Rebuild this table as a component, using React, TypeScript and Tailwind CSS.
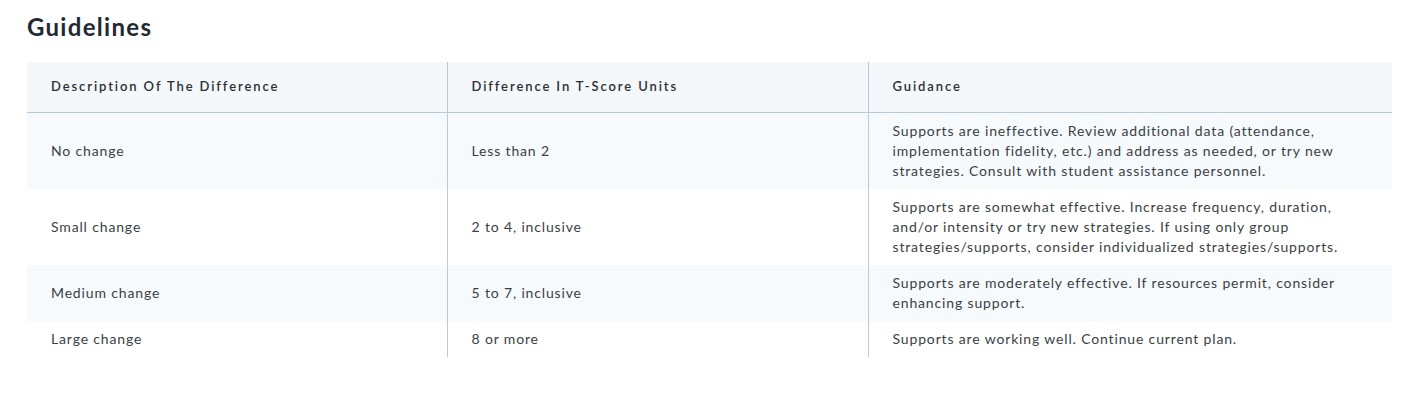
import React from 'react'

interface Row {
  description: string
  difference: string
  guidance: string
}

const rows: Row[] = [
  {
    description: 'No change',
    difference: 'Less than 2',
    guidance:
      'Supports are ineffective. Review additional data (attendance, implementation fidelity, etc.) and address as needed, or try new strategies. Consult with student assistance personnel.',
  },
  {
    description: 'Small change',
    difference: '2 to 4, inclusive',
    guidance:
      'Supports are somewhat effective. Increase frequency, duration, and/or intensity or try new strategies. If using only group strategies/supports, consider individualized strategies/supports.',
  },
  {
    description: 'Medium change',
    difference: '5 to 7, inclusive',
    guidance: 'Supports are moderately effective. If resources permit, consider enhancing support.',
  },
  {
    description: 'Large change',
    difference: '8 or more',
    guidance: 'Supports are working well. Continue current plan.',
  },
]

export default function App() {
  return (
    <div className="min-h-[396px] bg-white px-[27px] pt-[10px] font-['Lato','Liberation_Sans',sans-serif] text-[#3a3f44]">
      <h2 className="text-[24px] leading-[34px] font-bold tracking-[1.3px] text-[#1f2a33]">Guidelines</h2>
      <table className="mt-[18px] w-full table-fixed border-collapse">
        <colgroup>
          <col className="w-[420px]" />
          <col className="w-[421px]" />
          <col />
        </colgroup>
        <thead>
          <tr className="h-[50px] border-b border-[#b9cbd8] bg-[#f4f8fb] text-left">
            <th className="px-6 text-[13px] font-semibold tracking-[1.9px] text-[#2a3036]">
              Description Of The Difference
            </th>
            <th className="border-l border-[#b9cbd8] px-6 text-[13px] font-semibold tracking-[1.9px] text-[#2a3036]">
              Difference In T-Score Units
            </th>
            <th className="border-l border-[#b9cbd8] px-6 text-[13px] font-semibold tracking-[1.9px] text-[#2a3036]">
              Guidance
            </th>
          </tr>
        </thead>
        <tbody className="text-[14px] leading-5 tracking-[0.85px]">
          {rows.map((row, i) => (
            <tr key={row.description} className={i % 2 === 0 ? 'bg-[#f7fafc]' : 'bg-white'}>
              <td className="px-6 py-2 align-middle">{row.description}</td>
              <td className="border-l border-[#b9cbd8] px-6 py-2 align-middle">{row.difference}</td>
              <td className="border-l border-[#b9cbd8] px-6 py-2 align-middle">{row.guidance}</td>
            </tr>
          ))}
        </tbody>
      </table>
    </div>
  )
}
